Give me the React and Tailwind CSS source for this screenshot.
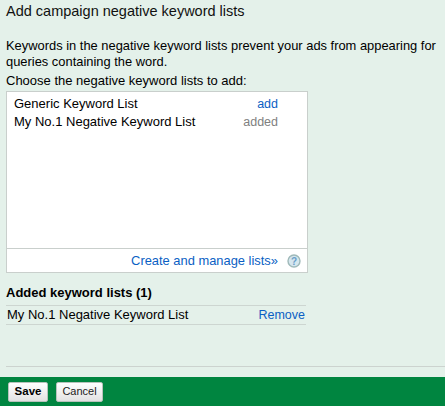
export default function App() {
  return (
    <div className="w-[445px] h-[406px] flex flex-col bg-[#e4f1ea] text-[13px] text-black overflow-hidden" style={{ fontFamily: '"Liberation Sans", Arial, sans-serif' }}>
      <div className="flex-1 flex flex-col pl-[6px]">
        <h1 className="text-[14.5px] leading-[16px] pt-[3px] font-normal text-[#111]">Add campaign negative keyword lists</h1>
        <p className="mt-[19px] leading-[16px] w-[438px] text-[12.9px]">Keywords in the negative keyword lists prevent your ads from appearing for queries containing the word.</p>
        <p className="mt-[3px] leading-[16px]">Choose the negative keyword lists to add:</p>
        <div className="mt-[2px] w-[302px] h-[182px] border border-[#c9cfcc] bg-white flex flex-col">
          <div className="flex-1 pt-[3px] pl-[7px] pr-[29px]">
            <div className="flex justify-between items-baseline leading-[18px]"><span>Generic Keyword List</span><span className="text-[#0a5fc4] text-[12.5px]">add</span></div>
            <div className="flex justify-between items-baseline leading-[18px]"><span>My No.1 Negative Keyword List</span><span className="text-[#808080] text-[12.5px]">added</span></div>
          </div>
          <div className="h-[24px] border-t border-[#c9cfcc] flex items-center justify-end pr-[6px] gap-[9px]">
            <span className="text-[#0a5fc4] text-[12.9px]">Create and manage lists»</span>
            <svg width="14" height="14" viewBox="0 0 14 14">
              <circle cx="7" cy="7" r="6" fill="#d5e6ee" stroke="#9fb9b9" strokeWidth="1.4" />
              <text x="7" y="10.5" textAnchor="middle" fontSize="10" fontWeight="700" fill="#6a9ec9" fontFamily="Liberation Sans">?</text>
            </svg>
          </div>
        </div>
        <h2 className="mt-[12px] font-bold leading-[16px]">Added keyword lists (1)</h2>
        <div className="mt-[4px] w-[300px] border-y border-[#cdd6d1] h-[20px] flex items-baseline justify-between pl-[1px] pr-[1px] leading-[18px]">
          <span>My No.1 Negative Keyword List</span><span className="text-[#0a5fc4] text-[12.5px]">Remove</span>
        </div>
        <div className="mt-auto mb-[10px] border-t border-[#ccd3cf]" />
      </div>
      <div className="h-[29px] bg-[#008540] flex items-center pl-[8px] gap-[8px] text-[11px]">
        <button className="w-[40px] h-[20px] rounded-[2px] bg-gradient-to-b from-white to-[#e2e2e2] border border-[#b8c2bc] font-bold text-[11.5px]">Save</button>
        <button className="w-[47px] h-[20px] rounded-[2px] bg-gradient-to-b from-white to-[#e2e2e2] border border-[#b8c2bc] text-[#222]">Cancel</button>
      </div>
    </div>
  );
}
